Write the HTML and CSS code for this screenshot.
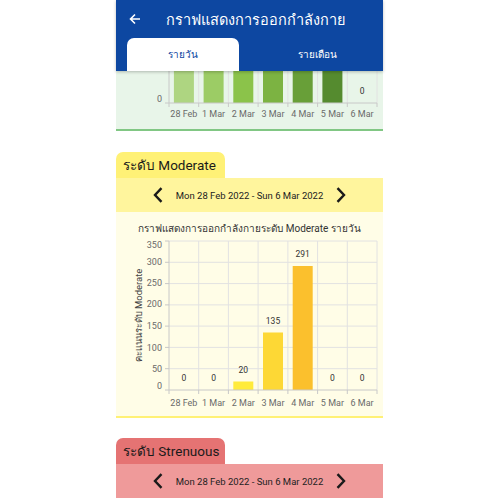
FILE: index.html
```html
<!DOCTYPE html>
<html>
<head>
<meta charset="utf-8">
<link rel="stylesheet" href="styles.css">
</head>
<body>
<div class="app">
  <header class="header">
    <div class="title-row">
      <svg class="back" width="12" height="12" viewBox="0 0 12 12"><path d="M11 6H2M6 1.5L1.5 6 6 10.5" fill="none" stroke="#fff" stroke-width="1.6"/></svg>
      <span class="title">กราฟแสดงการออกกำลังกาย</span>
    </div>
    <div class="tabs">
      <div class="tab active">รายวัน</div>
      <div class="tab">รายเดือน</div>
    </div>
  </header>

  <section class="panel green">
    <svg class="chart" width="267" height="58" viewBox="0 0 267 58">
      <g class="grid">
        <line x1="82.7" y1="0" x2="82.7" y2="32"/><line x1="112.4" y1="0" x2="112.4" y2="32"/><line x1="142.1" y1="0" x2="142.1" y2="32"/><line x1="171.9" y1="0" x2="171.9" y2="32"/><line x1="201.6" y1="0" x2="201.6" y2="32"/><line x1="231.3" y1="0" x2="231.3" y2="32"/><line x1="261" y1="0" x2="261" y2="32"/>
      </g>
      <rect x="57.9" y="0" width="20" height="32" fill="#aed581"/>
      <rect x="87.6" y="0" width="20" height="32" fill="#9ccc65"/>
      <rect x="117.3" y="0" width="20" height="32" fill="#8bc34a"/>
      <rect x="147" y="0" width="20" height="32" fill="#7cb342"/>
      <rect x="176.7" y="0" width="20" height="32" fill="#689f38"/>
      <rect x="206.4" y="0" width="20" height="32" fill="#558b2f"/>
      <g class="axis">
        <line x1="53" y1="0" x2="53" y2="32"/>
        <line x1="49" y1="32" x2="261" y2="32"/>
        <line x1="53" y1="32" x2="53" y2="36"/><line x1="82.7" y1="32" x2="82.7" y2="36"/><line x1="112.4" y1="32" x2="112.4" y2="36"/><line x1="142.1" y1="32" x2="142.1" y2="36"/><line x1="171.9" y1="32" x2="171.9" y2="36"/><line x1="201.6" y1="32" x2="201.6" y2="36"/><line x1="231.3" y1="32" x2="231.3" y2="36"/><line x1="261" y1="32" x2="261" y2="36"/>
      </g>
      <text class="ylab" x="46" y="30.5">0</text>
      <text class="val" x="246.1" y="23">0</text>
      <g class="xlab">
        <text x="67.9" y="45.5">28 Feb</text><text x="97.6" y="45.5">1 Mar</text><text x="127.3" y="45.5">2 Mar</text><text x="157" y="45.5">3 Mar</text><text x="186.7" y="45.5">4 Mar</text><text x="216.4" y="45.5">5 Mar</text><text x="246.1" y="45.5">6 Mar</text>
      </g>
    </svg>
  </section>

  <section class="level moderate">
    <div class="level-tab">ระดับ Moderate</div>
    <div class="nav">
      <svg class="chev" width="10" height="16" viewBox="0 0 10 16"><path d="M8.5 1.2L2 8l6.5 6.8" fill="none" stroke="#1a1a1a" stroke-width="2.4"/></svg>
      <span class="range">Mon 28 Feb 2022 - Sun 6 Mar 2022</span>
      <svg class="chev" width="10" height="16" viewBox="0 0 10 16"><path d="M1.5 1.2L8 8l-6.5 6.8" fill="none" stroke="#1a1a1a" stroke-width="2.4"/></svg>
    </div>
    <div class="panel yellow">
      <svg class="chart" width="267" height="204" viewBox="0 0 267 204">
        <text class="ctitle" x="133.5" y="19.5">กราฟแสดงการออกกำลังกายระดับ Moderate รายวัน</text>
        <g class="grid">
          <line x1="53" y1="29" x2="261" y2="29"/><line x1="53" y1="50.3" x2="261" y2="50.3"/><line x1="53" y1="71.6" x2="261" y2="71.6"/><line x1="53" y1="92.9" x2="261" y2="92.9"/><line x1="53" y1="114.1" x2="261" y2="114.1"/><line x1="53" y1="135.4" x2="261" y2="135.4"/><line x1="53" y1="156.7" x2="261" y2="156.7"/>
          <line x1="82.7" y1="29" x2="82.7" y2="178"/><line x1="112.4" y1="29" x2="112.4" y2="178"/><line x1="142.1" y1="29" x2="142.1" y2="178"/><line x1="171.9" y1="29" x2="171.9" y2="178"/><line x1="201.6" y1="29" x2="201.6" y2="178"/><line x1="231.3" y1="29" x2="231.3" y2="178"/><line x1="261" y1="29" x2="261" y2="178"/>
        </g>
        <rect x="117.3" y="169.5" width="20" height="8.5" fill="#ffeb3b"/>
        <rect x="147" y="120.5" width="20" height="57.5" fill="#fdd835"/>
        <rect x="176.7" y="54" width="20" height="124" fill="#fbc02d"/>
        <g class="axis">
          <line x1="53" y1="29" x2="53" y2="182"/>
          <line x1="49" y1="178" x2="261" y2="178"/>
          <line x1="49" y1="29" x2="53" y2="29"/><line x1="49" y1="50.3" x2="53" y2="50.3"/><line x1="49" y1="71.6" x2="53" y2="71.6"/><line x1="49" y1="92.9" x2="53" y2="92.9"/><line x1="49" y1="114.1" x2="53" y2="114.1"/><line x1="49" y1="135.4" x2="53" y2="135.4"/><line x1="49" y1="156.7" x2="53" y2="156.7"/>
          <line x1="82.7" y1="178" x2="82.7" y2="182"/><line x1="112.4" y1="178" x2="112.4" y2="182"/><line x1="142.1" y1="178" x2="142.1" y2="182"/><line x1="171.9" y1="178" x2="171.9" y2="182"/><line x1="201.6" y1="178" x2="201.6" y2="182"/><line x1="231.3" y1="178" x2="231.3" y2="182"/><line x1="261" y1="178" x2="261" y2="182"/>
        </g>
        <g class="ylabs">
          <text x="46" y="36">350</text><text x="46" y="53">300</text><text x="46" y="74">250</text><text x="46" y="95">200</text><text x="46" y="117">150</text><text x="46" y="139">100</text><text x="46" y="160">50</text><text x="46" y="177">0</text>
        </g>
        <g class="vals">
          <text x="67.9" y="169">0</text><text x="97.6" y="169">0</text><text x="127.3" y="161">20</text><text x="157" y="112">135</text><text x="186.7" y="45">291</text><text x="216.4" y="169">0</text><text x="246.1" y="169">0</text>
        </g>
        <g class="xlab">
          <text x="67.9" y="193.5">28 Feb</text><text x="97.6" y="193.5">1 Mar</text><text x="127.3" y="193.5">2 Mar</text><text x="157" y="193.5">3 Mar</text><text x="186.7" y="193.5">4 Mar</text><text x="216.4" y="193.5">5 Mar</text><text x="246.1" y="193.5">6 Mar</text>
        </g>
        <text class="ytitle" transform="translate(25.5 103.5) rotate(-90)">คะแนนระดับ Moderate</text>
      </svg>
    </div>
  </section>

  <section class="level strenuous">
    <div class="level-tab">ระดับ Strenuous</div>
    <div class="nav">
      <svg class="chev" width="10" height="16" viewBox="0 0 10 16"><path d="M8.5 1.2L2 8l6.5 6.8" fill="none" stroke="#1a1a1a" stroke-width="2.4"/></svg>
      <span class="range">Mon 28 Feb 2022 - Sun 6 Mar 2022</span>
      <svg class="chev" width="10" height="16" viewBox="0 0 10 16"><path d="M1.5 1.2L8 8l-6.5 6.8" fill="none" stroke="#1a1a1a" stroke-width="2.4"/></svg>
    </div>
  </section>
</div>
</body>
</html>
```

FILE: styles.css
```css
html, body {
  margin: 0;
  padding: 0;
  background: #ffffff;
  height: 500px;
  overflow: hidden;
}
body {
  font-family: Roboto, "Noto Sans", "DejaVu Sans", sans-serif;
  color: #222;
}
.app {
  width: 267px;
  margin-left: 116px;
  display: flex;
  flex-direction: column;
}
.header {
  background: #0d47a1;
  height: 71px;
  display: flex;
  flex-direction: column;
  box-shadow: 0 1px 3px rgba(0,0,0,0.25);
  position: relative;
  z-index: 2;
  overflow: hidden;
}
.title-row {
  height: 38px;
  display: flex;
  align-items: center;
  padding-left: 13px;
}
.back { display: block; }
.title {
  color: #fff;
  font-size: 14.5px;
  margin-left: 25px;
}
.tabs {
  display: flex;
  height: 33px;
  padding-left: 11px;
}
.tab {
  flex: 1;
  display: flex;
  align-items: center;
  justify-content: center;
  color: #fff;
  font-size: 10px;
  padding-left: 12px;
}
.tab.active {
  flex: 0 0 112px;
  padding-left: 0;
  background: #fff;
  color: #0d47a1;
  border-radius: 7px 7px 0 0;
}
.panel { display: flex; }
.green {
  background: #e8f5e9;
  border-bottom: 2px solid #81c784;
}
.chart { display: block; }
.chart text { font-family: Roboto, "Noto Sans", sans-serif; }
.grid line { stroke: #e2e2e2; stroke-width: 1; }
.axis line { stroke: #c8c8c8; stroke-width: 1; }
.xlab text { font-size: 9px; fill: #6a6a6a; text-anchor: middle; }
.ylab, .ylabs text { font-size: 9px; fill: #6a6a6a; text-anchor: end; }
.val, .vals text { font-size: 8.5px; fill: #333; text-anchor: middle; }
.ctitle { font-size: 10px; fill: #333; text-anchor: middle; }
.ytitle { font-size: 9.5px; fill: #444; text-anchor: middle; }

.level { margin-top: 21px; display: flex; flex-direction: column; }
.strenuous { margin-top: 20px; }
.level-tab {
  align-self: flex-start;
  width: 102px;
  height: 26px;
  padding-left: 7px;
  display: flex;
  align-items: center;
  font-size: 13.5px;
  color: #1a1a1a;
  border-radius: 7px 7px 0 0;
}
.nav {
  height: 34px;
  display: flex;
  align-items: center;
  justify-content: center;
  gap: 13px;
}
.chev { display: block; }
.range { font-size: 9.5px; color: #222; }
.moderate .level-tab { background: #fff176; }
.moderate .nav { background: #fff59d; }
.yellow {
  background: #fffde7;
  border-bottom: 2px solid #fff176;
}
.strenuous .level-tab { background: #e57373; }
.strenuous .nav { background: #ef9a9a; }
```
